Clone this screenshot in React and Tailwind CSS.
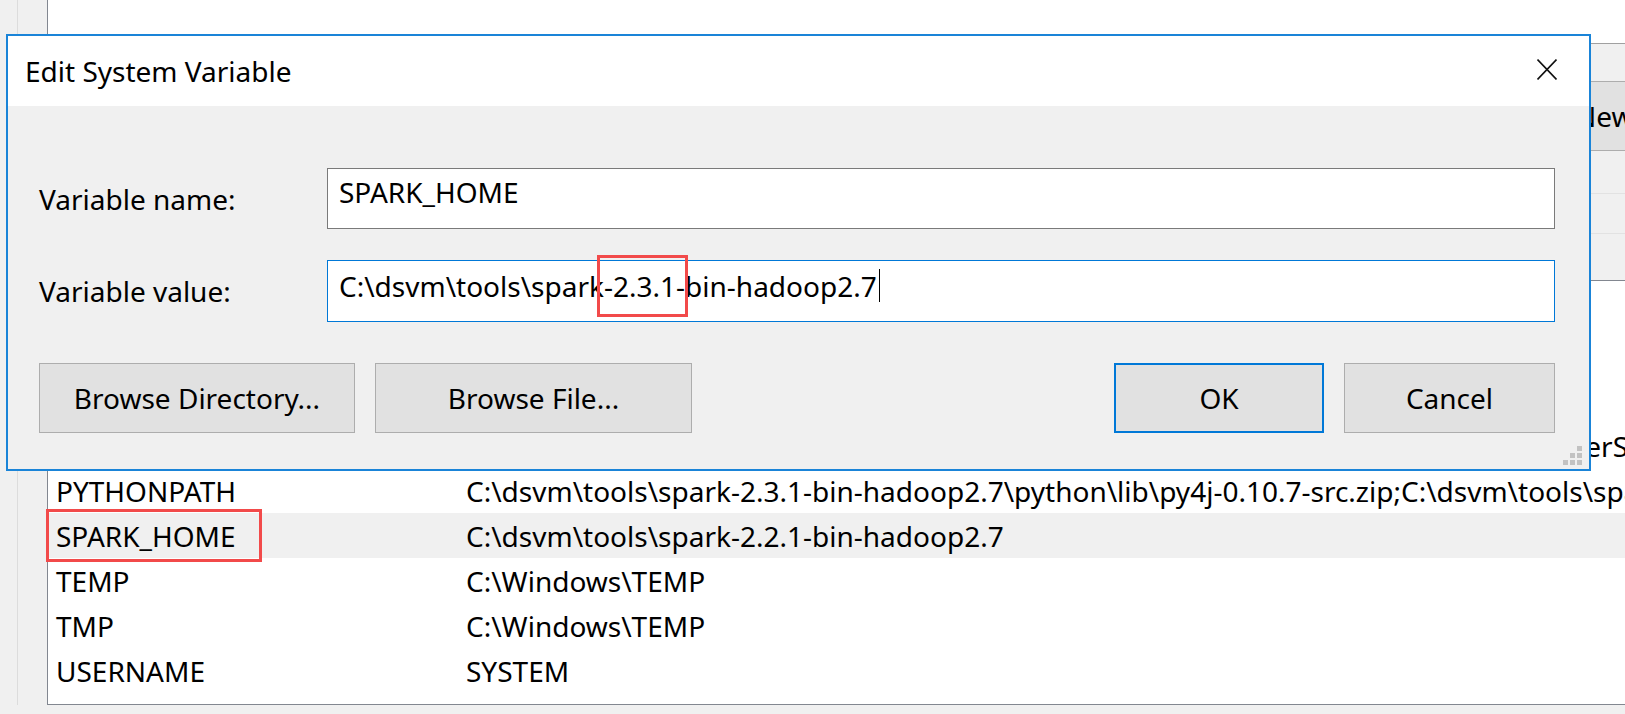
import React from "react";

const BS = "\\";

function Row({ name, value, selected, marked }) {
  return (
    <div className={"relative flex h-[45px] pt-[2px] leading-[43px] whitespace-nowrap " + (selected ? "bg-[#f0f0f0]" : "")}>
      <div className="w-[418px] shrink-0 pl-[8px]">{name}</div>
      <div className="whitespace-nowrap">{value}</div>
      {marked && (
        <div className="absolute left-[-2px] top-[-4px] w-[216px] h-[53px] border-[3px] border-[#f24a4a]" />
      )}
    </div>
  );
}

function Grip() {
  const cells = [0, 0, 1, 0, 1, 1, 1, 1, 1];
  return (
    <div className="absolute right-[7px] bottom-[4px] grid grid-cols-3 gap-[2px] w-[19px] h-[19px]">
      {cells.map((c, i) => (
        <div key={i} className={c ? "w-[5px] h-[5px] bg-[#c2c2c2]" : "w-[5px] h-[5px]"} />
      ))}
    </div>
  );
}

export default function App() {
  const rows = [
    { name: "PROCESSOR_IDENTIFIER", value: "Intel64 Family 6 Model 79 Stepping 1, GenuineIntel" },
    { name: "PROCESSOR_LEVEL", value: "6" },
    { name: "PROCESSOR_REVISION", value: "4f01" },
    {
      name: "PSModulePath",
      value: (
        <>
          <span className="inline-block w-[1064px] overflow-hidden align-top whitespace-nowrap">
            {"%ProgramFiles%\\WindowsPowerShell\\Modules;C:\\Windows\\system32\\Windows"}
          </span>
          {"PowerShell\\v1.0\\Modules"}
        </>
      ),
    },
    {
      name: "PYTHONPATH",
      value:
        "C:\\dsvm\\tools\\spark-2.3.1-bin-hadoop2.7\\python\\lib\\py4j-0.10.7-src.zip;C:\\dsvm\\tools\\spark-2.3.1-bin-hadoop2.7\\python",
    },
    { name: "SPARK_HOME", value: "C:\\dsvm\\tools\\spark-2.2.1-bin-hadoop2.7", selected: true, marked: true },
    { name: "TEMP", value: "C:\\Windows\\TEMP" },
    { name: "TMP", value: "C:\\Windows\\TEMP" },
    { name: "USERNAME", value: "SYSTEM" },
  ];

  return (
    <div className="relative w-[1625px] h-[714px] overflow-hidden bg-[#f0f0f0] font-['Noto_Sans','Open_Sans',sans-serif] text-[28px] text-black">
      {/* background window */}
      <div className="flex h-full pb-[9px]">
        <div className="w-[47px] shrink-0 pl-[17px]">
          <div className="h-full border-l border-[#dcdcdc]" />
        </div>
        <div className="flex-1 flex flex-col min-w-0">
          <div className="flex h-[280px] shrink-0">
            <div className="w-[1500px] shrink-0 bg-white border-l border-[#828790]" />
            <div className="flex-1 flex flex-col">
              <div className="h-[43px] bg-white" />
              <div className="h-[38px] border-t border-[#a0a0a0]" />
              <div className="h-[70px] border-y border-[#adadad] bg-[#e1e1e1] flex items-center pl-[28px] whitespace-nowrap leading-[34px]">
                New...
              </div>
              <div className="h-[42px]" />
              <div className="h-[40px] border-t border-[#e2e2e2]" />
              <div className="flex-1 border-t border-[#e2e2e2]" />
            </div>
          </div>
          <div className="flex-1 border-l border-t border-b border-[#828790] bg-white pt-[7px]">
            {rows.map((r) => (
              <Row key={r.name} {...r} />
            ))}
          </div>
        </div>
      </div>

      {/* dialog */}
      <div className="absolute left-[6px] top-[34px] w-[1585px] h-[437px] border-2 border-[#1a84d8] bg-[#f0f0f0] flex flex-col">
        <div className="h-[70px] shrink-0 bg-white flex items-center justify-between pl-[17px] pr-[32px]">
          <span className="leading-[34px]">Edit System Variable</span>
          <svg width="20" height="21" viewBox="0 0 20 21" className="mb-[3px]">
            <path d="M0.5 0.5 L19.5 20.5 M19.5 0.5 L0.5 20.5" stroke="#111" strokeWidth="1.6" fill="none" />
          </svg>
        </div>
        <div className="relative flex-1 pl-[31px] pr-[34px] pt-[62px]">
          <div className="flex">
            <div className="w-[288px] shrink-0 mt-[14px] leading-[34px]">Variable name:</div>
            <div className="flex-1 h-[61px] border border-[#7a7a7a] bg-white pl-[11px] pt-[6px] leading-[34px]">
              SPARK_HOME
            </div>
          </div>
          <div className="flex mt-[31px]">
            <div className="w-[288px] shrink-0 mt-[14px] leading-[34px]">Variable value:</div>
            <div className="flex-1 h-[62px] border border-[#0078d7] bg-white pl-[11px] pt-[8px] leading-[34px] whitespace-nowrap">
              {"C:" + BS + "dsvm" + BS + "tools" + BS + "spark"}
              <span className="relative inline-block">
                -2.3.1-
                <span className="absolute left-[-7px] right-[-3px] top-[-14px] bottom-[-14px] border-[3px] border-[#f24a4a]" />
              </span>
              bin-hadoop2.7
              <span className="inline-block w-px h-[33px] bg-black align-top ml-[2px]" />
            </div>
          </div>
          <div className="flex justify-between mt-[41px]">
            <div className="flex gap-[20px]">
              <button className="w-[316px] h-[70px] bg-[#e1e1e1] border border-[#adadad] leading-[34px] flex items-center justify-center">
                Browse Directory...
              </button>
              <button className="w-[317px] h-[70px] bg-[#e1e1e1] border border-[#adadad] leading-[34px] flex items-center justify-center">
                Browse File...
              </button>
            </div>
            <div className="flex gap-[20px]">
              <button className="w-[210px] h-[70px] bg-[#e1e1e1] border-2 border-[#0078d7] leading-[34px] flex items-center justify-center">
                OK
              </button>
              <button className="w-[211px] h-[70px] bg-[#e1e1e1] border border-[#adadad] leading-[34px] flex items-center justify-center">
                Cancel
              </button>
            </div>
          </div>
          <Grip />
        </div>
      </div>
    </div>
  );
}
